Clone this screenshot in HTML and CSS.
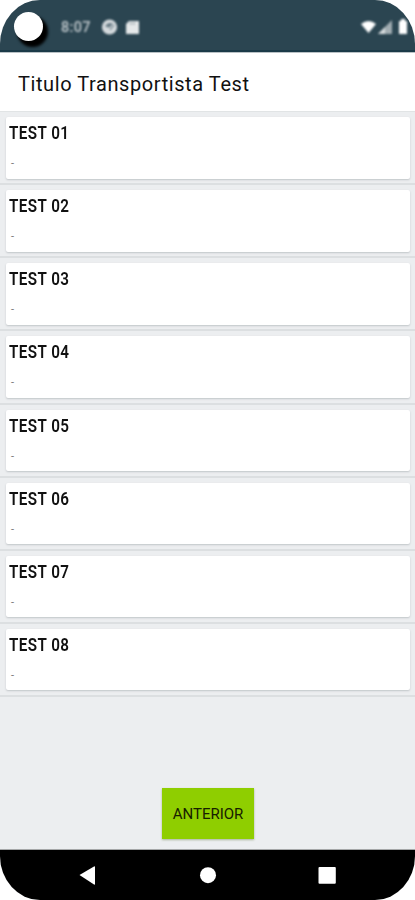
FILE: index.html
```html
<!DOCTYPE html>
<html lang="es">
<head>
<meta charset="utf-8">
<title>Titulo Transportista Test</title>
<link rel="stylesheet" href="styles.css">
</head>
<body>
<div class="phone">
  <header class="status">
    <span class="camera"></span>
    <span class="clock">8:07</span>
    <svg class="status-left" width="40" height="18" viewBox="0 0 40 18">
      <circle cx="8.5" cy="9" r="7.6" fill="#d5dadd"/>
      <path d="M5 8a5 5 0 0 1 6-2L8 9Z M9 12l4-5" fill="#667983" stroke="#667983" stroke-width="1.2"/>
      <path d="M28 3h10v13H25V6Z" fill="#e5e8e9"/>
      <path d="M30 4v3M33 4v3" stroke="#87959c"/>
    </svg>
    <svg class="status-right" width="50" height="20" viewBox="0 0 50 20">
      <path d="M1 6Q8.500 0 16 6L8.500 15Z" fill="#fff"/>
      <path d="M32 2v14H18Z" fill="#a2adb2"/>
      <path d="M25 9v7h-7Z" fill="#d7dcde"/>
      <path d="M39 3h2V1h4v2h2v13h-8Z" fill="#fff"/>
    </svg>
  </header>
  <h1 class="title"><span>Titulo Transportista Test</span></h1>
  <main class="content">
    <ul class="list">
      <li class="row"><div class="card"><b>TEST 01</b><span>-</span></div></li>
      <li class="row"><div class="card"><b>TEST 02</b><span>-</span></div></li>
      <li class="row"><div class="card"><b>TEST 03</b><span>-</span></div></li>
      <li class="row"><div class="card"><b>TEST 04</b><span>-</span></div></li>
      <li class="row"><div class="card"><b>TEST 05</b><span>-</span></div></li>
      <li class="row"><div class="card"><b>TEST 06</b><span>-</span></div></li>
      <li class="row"><div class="card"><b>TEST 07</b><span>-</span></div></li>
      <li class="row"><div class="card"><b>TEST 08</b><span>-</span></div></li>
    </ul>
    <button class="previous"><span>ANTERIOR</span></button>
  </main>
  <nav class="navbar">
    <svg width="415" height="50" viewBox="0 0 415 50">
      <path d="M79.500 25 94 16.500q1-.5 1 .5v17q0 1-1 .5Z" fill="#fff"/>
      <circle cx="208" cy="25.200" r="8" fill="#fff"/>
      <rect x="318.500" y="17" width="17.300" height="16.800" rx="1" fill="#fff"/>
    </svg>
  </nav>
</div>
</body>
</html>
```
FILE: styles.css
```css
* { box-sizing: border-box; }
body { margin: 0; background: #fff; font-family: Roboto, sans-serif; }
.phone {
  width: 415px;
  height: 900px;
  display: flex;
  flex-direction: column;
  overflow: hidden;
  border-radius: 40px / 44px;
  background: #eceef0;
}
.status {
  height: 52px;
  flex: none;
  display: flex;
  align-items: center;
  padding: 3px 5px 0 14px;
  background: #2b4551;
  border-bottom: 2px solid #1b3a48;
}
.camera {
  width: 29px;
  height: 29px;
  border-radius: 50%;
  background: #fff;
  box-shadow: 4px 5px 3px 1px #000;
}
.clock {
  margin-left: 18px;
  width: 32px;
  padding-top: 2px;
  font-size: 14.5px;
  font-weight: 500;
  letter-spacing: .3px;
  color: #c3cbcf;
  filter: blur(1.2px);
}
.status-left { margin-left: 8px; filter: blur(1px); }
.status-right { margin: 2px 0 0 auto; filter: blur(1px); }
.title {
  height: 59px;
  flex: none;
  margin: 0;
  padding: 3px 18px 0;
  display: flex;
  align-items: center;
  background: #fff;
  border-top: 1px solid #b9c1c5;
  font-size: 20px;
  font-weight: 400;
  letter-spacing: .58px;
  color: #111;
}
.content {
  flex: 1;
  display: flex;
  flex-direction: column;
  align-items: center;
  border-bottom: 1px solid #a5a7a8;
}
.list { width: 100%; margin: 0; padding: 0; list-style: none; border-top: 1px solid #e1e4e5; }
.row {
  height: 73.150px;
  padding: 5px 5px 0 6px;
  border-bottom: 2px solid #dcdfe1;
}
.card {
  height: 61.500px;
  padding: 6px 3px;
  display: flex;
  flex-direction: column;
  border-radius: 2px;
  background: #fff;
  box-shadow: 0 1px 2px #c0c5c8;
}
.card b {
  font-size: 17.5px;
  line-height: 20px;
  font-weight: 600;
  letter-spacing: .5px;
  color: #111;
  transform: scaleX(.87);
  transform-origin: left;
}
.card span {
  margin: 13px 0 0 2px;
  font-size: 11px;
  line-height: 16px;
  color: #777;
}
.previous {
  width: 92px;
  height: 51px;
  margin: 91px 0 0 1px;
  padding: 1px 0 0;
  border: 0;
  background: #8fce00;
  box-shadow: 0 1px 2px #a9b59a;
  font: 400 15px Roboto, sans-serif;
  color: #172000;
}
.navbar { height: 50px; flex: none; background: #000; }
.navbar svg { display: block; }
```
